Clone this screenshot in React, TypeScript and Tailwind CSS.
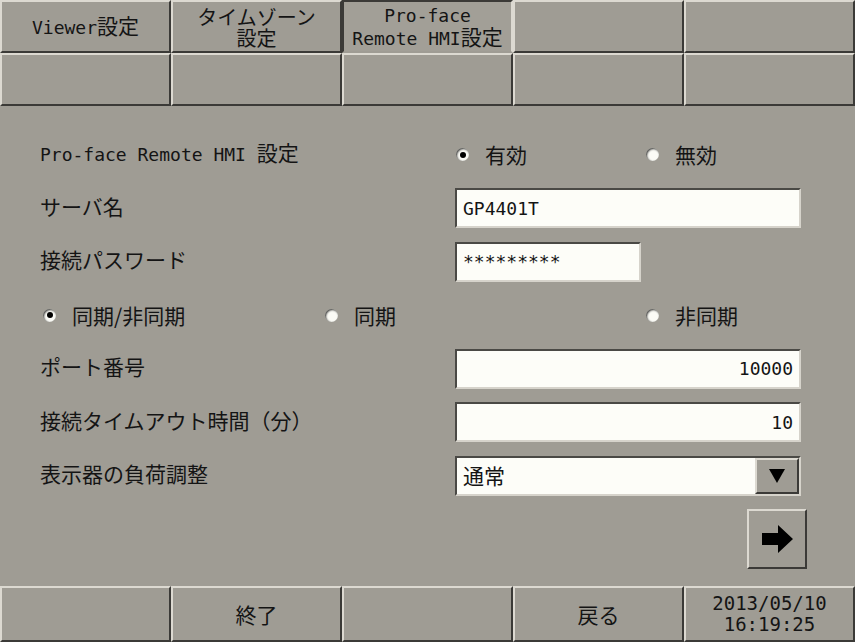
import React from 'react';

const mono = "font-['DejaVu_Sans_Mono','Noto_Sans_CJK_JP',monospace]";

// raised panel button in the HMI style
const Key: React.FC<{ children?: React.ReactNode; active?: boolean; className?: string }> = ({ children, active, className = '' }) => (
    <div
        className={`flex flex-col items-center justify-center text-center leading-[21px] text-[#141414] bg-[#9f9c94] border-2 ${
            active
                ? 'border-t-[#3b3a37] border-l-[#3b3a37] border-r-[#dcd9d1] border-b-[#9f9c94] bg-[#a29f97]'
                : 'border-t-[#dcd9d1] border-l-[#dcd9d1] border-r-[#3b3a37] border-b-[#3b3a37]'
        } ${className}`}
    >
        {children}
    </div>
);

const Jp: React.FC<{ children: React.ReactNode }> = ({ children }) => (
    <span className="text-[21px] leading-[21px] font-['Noto_Sans_CJK_JP',sans-serif]">{children}</span>
);

const Radio: React.FC<{ checked?: boolean; label: string }> = ({ checked, label }) => (
    <div className="flex items-center gap-[16px]">
        <div className="w-[13px] h-[13px] rounded-full bg-[#fbfbf6] shadow-[inset_1px_1px_2px_rgba(0,0,0,0.75)] flex items-center justify-center">
            {checked && <div className="w-[6px] h-[6px] rounded-full bg-black" />}
        </div>
        <Jp>{label}</Jp>
    </div>
);

const Field: React.FC<{ children?: React.ReactNode; right?: boolean; className?: string }> = ({ children, right, className = '' }) => (
    <div
        className={`h-[40px] flex items-center px-[6px] bg-[#fdfdf8] border-2 border-t-[#4a4945] border-l-[#4a4945] border-r-[#d6d3cb] border-b-[#d6d3cb] text-[18px] ${
            right ? 'justify-end' : ''
        } ${className}`}
    >
        {children}
    </div>
);

const Row: React.FC<{ children: React.ReactNode }> = ({ children }) => (
    <div className="h-[53.5px] flex items-center">{children}</div>
);

export default function App() {
    return (
        <div className={`w-[855px] h-[642px] bg-[#9f9c94] flex flex-col text-[#141414] ${mono} text-[18px]`}>
            {/* tab rows */}
            <div className="grid grid-cols-5 grid-rows-[53px_53px]">
                <Key>
                    <div>
                        Viewer<Jp>設定</Jp>
                    </div>
                </Key>
                <Key>
                    <div className="text-[20px] leading-[21px] font-['Noto_Sans_CJK_JP',sans-serif]">
                        タイムゾーン
                        <br />
                        設定
                    </div>
                </Key>
                <Key active>
                    <div>Pro-face</div>
                    <div>
                        Remote HMI<Jp>設定</Jp>
                    </div>
                </Key>
                <Key />
                <Key />
                <Key />
                <Key />
                <Key />
                <Key />
                <Key />
            </div>

            {/* settings */}
            <div className="flex-1 flex flex-col pt-[22px] pl-[40px] pr-[54px]">
                <Row>
                    <div className="w-[415px]">
                        Pro-face Remote HMI <Jp>設定</Jp>
                    </div>
                    <div className="flex items-center">
                        <div className="w-[191px] pl-[1px]">
                            <Radio checked label="有効" />
                        </div>
                        <Radio label="無効" />
                    </div>
                </Row>
                <Row>
                    <div className="w-[415px]">
                        <Jp>サーバ名</Jp>
                    </div>
                    <Field className="flex-1">GP4401T</Field>
                </Row>
                <Row>
                    <div className="w-[415px]">
                        <Jp>接続パスワード</Jp>
                    </div>
                    <Field className="w-[186px]">*********</Field>
                </Row>
                <Row>
                    <div className="w-[285px] pl-[3px]">
                        <Radio checked label="同期/非同期" />
                    </div>
                    <div className="w-[321px]">
                        <Radio label="同期" />
                    </div>
                    <Radio label="非同期" />
                </Row>
                <Row>
                    <div className="w-[415px]">
                        <Jp>ポート番号</Jp>
                    </div>
                    <Field right className="flex-1">10000</Field>
                </Row>
                <Row>
                    <div className="w-[415px]">
                        <Jp>接続タイムアウト時間（分）</Jp>
                    </div>
                    <Field right className="flex-1">10</Field>
                </Row>
                <Row>
                    <div className="w-[415px]">
                        <Jp>表示器の負荷調整</Jp>
                    </div>
                    <Field className="flex-1 !pr-0">
                        <Jp>通常</Jp>
                        <div className="ml-auto w-[44px] h-[36px] bg-[#9f9c94] border-2 border-t-[#dcd9d1] border-l-[#dcd9d1] border-r-[#3b3a37] border-b-[#3b3a37] flex items-center justify-center">
                            <svg width="16" height="14" viewBox="0 0 16 14">
                                <path d="M0 0 H16 L8 14 Z" fill="#000" />
                            </svg>
                        </div>
                    </Field>
                </Row>
                <div className="flex justify-end mt-[6px] mr-[-6px]">
                    <Key className="w-[60px] h-[60px]">
                        <svg width="31" height="28" viewBox="0 0 31 28">
                            <path d="M0 8 H16 V0 L31 14 L16 28 V20 H0 Z" fill="#000" />
                        </svg>
                    </Key>
                </div>
            </div>

            {/* bottom row */}
            <div className="grid grid-cols-5 h-[56px]">
                <Key />
                <Key>
                    <Jp>終了</Jp>
                </Key>
                <Key />
                <Key>
                    <Jp>戻る</Jp>
                </Key>
                <Key className="leading-[19px] text-[19px]">
                    <div>2013/05/10</div>
                    <div>16:19:25</div>
                </Key>
            </div>
        </div>
    );
}
